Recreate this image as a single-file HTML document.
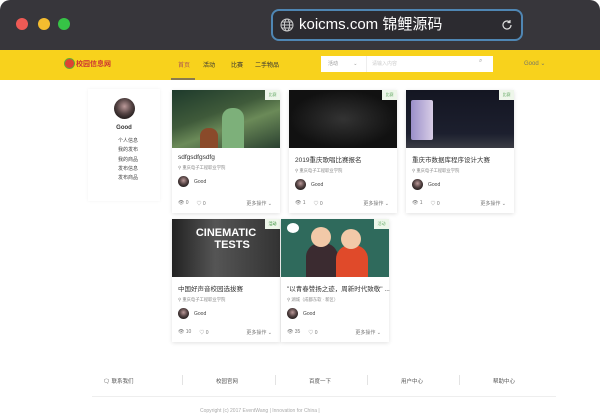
<!DOCTYPE html>
<html><head><meta charset="utf-8"><style>
*{margin:0;padding:0;box-sizing:border-box}
body{width:600px;height:420px;overflow:hidden;background:#fff;font-family:"Liberation Sans","Noto Sans CJK SC",sans-serif;position:relative}
.top{position:absolute;left:0;top:0;width:600px;height:52px;background:#37363b;border-radius:10px 10px 0 0}
.dot{position:absolute;top:18px;width:12px;height:12px;border-radius:50%}
.url{position:absolute;left:271px;top:9px;width:252px;height:32px;border:2px solid #4f86b3;border-radius:8px;background:#2c2b30;color:#fff;font-size:15px;line-height:28px;padding-left:26px}
.nav{position:absolute;left:0;top:50px;width:600px;height:30px;background:#f8d21c}
.nav span{position:absolute;font-size:6px;color:#333;top:10px}
.side{position:absolute;left:88px;top:89px;width:72px;height:112px;background:#fff;box-shadow:0 0 3px rgba(0,0,0,.06)}
.side p{font-size:5px;color:#444;text-align:left;margin-left:30px;line-height:9.3px}
.av{border-radius:50%;background:radial-gradient(circle at 50% 40%,#b99 0,#544 45%,#2d2525 70%)}
.card{position:absolute;width:108px;height:123px;background:#fff;box-shadow:0 1px 4px rgba(0,0,0,.12)}
.img{height:58px;position:relative}
.tag{position:absolute;right:0;top:0;width:15px;height:10px;background:#eef6ea;font-size:4px;color:#6a6;text-align:center;line-height:10px}
.t{font-size:6.5px;color:#333;margin:6px 0 0 6px;white-space:nowrap}
.s{font-size:4.3px;color:#888;margin:4px 0 0 6px}
.u{display:flex;align-items:center;margin:5px 0 0 6px;font-size:5px;color:#444}
.u i{width:11px;height:11px;margin-right:5px;display:block}
.b{position:absolute;bottom:6px;left:6px;right:8px;font-size:5px;color:#777;display:flex}
.b span{margin-right:8px}.b em{margin-left:auto;font-style:normal}
.foot{position:absolute;left:92px;top:365px;width:464px;height:32px;border-bottom:1px solid #eee}
.foot span{position:absolute;font-size:5.5px;color:#555;top:12px}
.sep{position:absolute;top:10px;width:1px;height:10px;background:#e3e3e3}
</style></head><body>
<div class="top">
<div class="dot" style="left:16px;background:#ee5a55"></div>
<div class="dot" style="left:38px;background:#f4bc2f"></div>
<div class="dot" style="left:58px;background:#36c346"></div>
<div class="url"><svg style="position:absolute;left:7px;top:7px" width="14" height="14" viewBox="0 0 14 14" fill="none" stroke="#ccc" stroke-width="1"><circle cx="7" cy="7" r="6"/><ellipse cx="7" cy="7" rx="2.6" ry="6"/><path d="M1 7h12M2 4h10M2 10h10"/></svg>koicms.com 锦鲤源码
<svg style="position:absolute;right:8px;top:8px" width="12" height="12" viewBox="0 0 12 12" fill="none" stroke="#ddd" stroke-width="1.2"><path d="M10 6a4 4 0 1 1-1.5-3.1M9 1v2.5H6.5"/></svg></div>
</div>
<div class="nav">
<div style="position:absolute;left:64px;top:8px;width:11px;height:11px;border-radius:50%;background:#d43;border:1.5px solid #6a3"></div>
<span style="left:76px;top:9px;font-size:7px;font-weight:bold;color:#c33">校园信息网</span>
<span style="left:178px;color:#a55">首页</span><div style="position:absolute;left:171px;top:28px;width:24px;height:2px;background:#8a7a50"></div>
<span style="left:203px">活动</span><span style="left:231px">比赛</span><span style="left:255px">二手物品</span>
<div style="position:absolute;left:321px;top:6px;width:172px;height:16px;background:#fff"></div>
<span style="left:328px;color:#999;font-size:5px">活动 &nbsp; &nbsp; &nbsp; &nbsp; &nbsp; ⌄</span>
<div style="position:absolute;left:366px;top:6px;width:1px;height:16px;background:#eee"></div>
<span style="left:372px;color:#ccc;font-size:5px">请输入内容</span>
<span style="left:479px;color:#999;font-size:6px;top:8px">⌕</span>
<span style="left:524px;color:#776;font-size:6px">Good ⌄</span>
</div>
<div class="side">
<div class="av" style="width:21px;height:21px;margin:9px auto 0"></div>
<div style="font-size:6px;text-align:center;margin:6px 0 6px;font-weight:bold;color:#333">Good</div>
<p>个人信息</p><p>我的发布</p><p>我的商品</p><p>发布信息</p><p>发布商品</p>
</div>

<div class="card" style="left:172px;top:90px"><div class="img" style="background:linear-gradient(160deg,#1e3a2c,#3f5a3a 40%,#6b8a58 60%,#2a4030)"><div style="position:absolute;left:50px;top:18px;width:22px;height:40px;background:#7db07a;border-radius:10px 10px 0 0"></div><div style="position:absolute;left:28px;top:38px;width:18px;height:20px;background:#8a4a2a;border-radius:8px 8px 0 0"></div><div class="tag">比赛</div></div>
<div class="t">sdfgsdfgsdfg</div><div class="s">⚲ 重庆电子工程职业学院</div><div class="u"><i class="av"></i>Good</div><div class="b"><span>👁 0</span><span>♡ 0</span><em>更多操作 ⌄</em></div></div>

<div class="card" style="left:289px;top:90px"><div class="img" style="background:radial-gradient(ellipse at 50% 50%,#333,#111 70%)"><div class="tag">比赛</div></div>
<div class="t">2019重庆歌唱比赛报名</div><div class="s">⚲ 重庆电子工程职业学院</div><div class="u"><i class="av"></i>Good</div><div class="b"><span>👁 1</span><span>♡ 0</span><em>更多操作 ⌄</em></div></div>

<div class="card" style="left:406px;top:90px"><div class="img" style="background:linear-gradient(180deg,#141622,#1c1f2e 75%,#3a3c44)"><div style="position:absolute;left:5px;top:10px;width:22px;height:40px;background:linear-gradient(90deg,#9a8fc9,#d8cde6);border-radius:2px"></div><div class="tag">比赛</div></div>
<div class="t">重庆市数据库程序设计大赛</div><div class="s">⚲ 重庆电子工程职业学院</div><div class="u"><i class="av"></i>Good</div><div class="b"><span>👁 1</span><span>♡ 0</span><em>更多操作 ⌄</em></div></div>

<div class="card" style="left:172px;top:219px"><div class="img" style="background:linear-gradient(90deg,#222,#555 40%,#333);color:#fff;font-weight:bold;font-size:11px;text-align:center;line-height:12px;padding-top:8px">CINEMATIC<br>&nbsp; &nbsp; TESTS<div class="tag">活动</div></div>
<div class="t">中国好声音校园选拔赛</div><div class="s">⚲ 重庆电子工程职业学院</div><div class="u"><i class="av"></i>Good</div><div class="b"><span>👁 10</span><span>♡ 0</span><em>更多操作 ⌄</em></div></div>

<div class="card" style="left:281px;top:219px"><div class="img" style="background:#2f6a5c"><div style="position:absolute;left:25px;top:24px;width:32px;height:34px;background:#3b2b30;border-radius:14px 14px 0 0"></div><div style="position:absolute;left:55px;top:26px;width:32px;height:32px;background:#e04a2a;border-radius:14px 14px 0 0"></div><div style="position:absolute;left:30px;top:8px;width:20px;height:20px;background:#f2c9a8;border-radius:50%"></div><div style="position:absolute;left:60px;top:10px;width:20px;height:20px;background:#f2c9a8;border-radius:50%"></div><div style="position:absolute;left:6px;top:4px;width:12px;height:10px;background:#fff;border-radius:50%"></div><div class="tag">活动</div></div>
<div class="t">"以青春赞扬之迹，周新时代致敬" ...</div><div class="s">⚲ 湖城（成都东软 · 新区）</div><div class="u"><i class="av"></i>Good</div><div class="b"><span>👁 35</span><span>♡ 0</span><em>更多操作 ⌄</em></div></div>

<div class="foot">
<span style="left:11px">🗨 联系我们</span><div class="sep" style="left:90px"></div>
<span style="left:124px">校园官网</span><div class="sep" style="left:183px"></div>
<span style="left:217px">百度一下</span><div class="sep" style="left:275px"></div>
<span style="left:309px">用户中心</span><div class="sep" style="left:367px"></div>
<span style="left:401px">帮助中心</span>
</div>
<div style="position:absolute;left:200px;top:408px;font-size:5px;color:#aaa">Copyright (c) 2017 EventWang | Innovation for China |</div>
</body></html>
